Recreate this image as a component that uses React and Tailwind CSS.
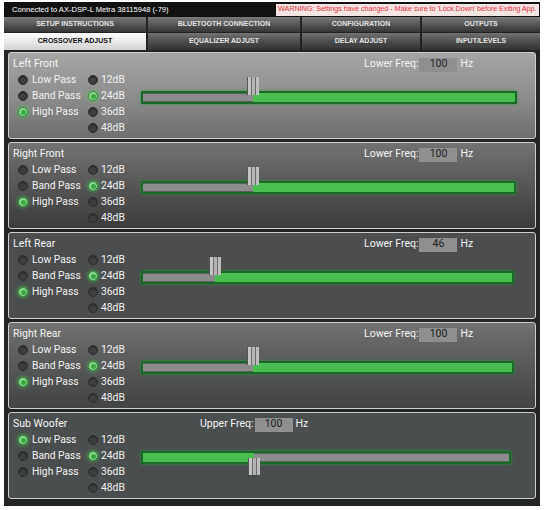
import React from "react";

const panels = [
    {
        name: "Left Front",
        bg: "bg-gradient-to-b from-[#a5a5a5] via-[#8e8e8e] to-[#6e6e6e]",
        freqLabel: "Lower Freq:",
        freq: "100",
        freqPad: "w-[355px]",
        filter: "High Pass",
        thumb: 110,
        low: false,
        track: "w-[376px]",
    },
    {
        name: "Right Front",
        bg: "bg-gradient-to-b from-[#737373] via-[#565656] to-[#3c3c3c]",
        freqLabel: "Lower Freq:",
        freq: "100",
        freqPad: "w-[355px]",
        filter: "High Pass",
        thumb: 110,
        low: false,
        track: "w-[375px]",
    },
    {
        name: "Left Rear",
        bg: "bg-[#4b4d4e]",
        freqLabel: "Lower Freq:",
        freq: "46",
        freqPad: "w-[355px]",
        filter: "High Pass",
        thumb: 72,
        low: false,
        track: "w-[373px]",
    },
    {
        name: "Right Rear",
        bg: "bg-gradient-to-b from-[#727272] via-[#575858] to-[#434444]",
        freqLabel: "Lower Freq:",
        freq: "100",
        freqPad: "w-[355px]",
        filter: "High Pass",
        thumb: 110,
        low: false,
        track: "w-[373px]",
    },
    {
        name: "Sub Woofer",
        bg: "bg-[#4b4e4f]",
        freqLabel: "Upper Freq:",
        freq: "100",
        freqPad: "w-[191px]",
        filter: "Low Pass",
        thumb: 111,
        low: true,
        track: "w-[370px]",
    },
];

const topTabs = [
    { label: "SETUP INSTRUCTIONS", w: "w-[144px]" },
    { label: "BLUETOOTH CONNECTION", w: "w-[154px]" },
    { label: "CONFIGURATION", w: "w-[120px]" },
    { label: "OUTPUTS", w: "w-[118px]" },
];

const subTabs = [
    { label: "CROSSOVER ADJUST", w: "w-[144px]", active: true },
    { label: "EQUALIZER ADJUST", w: "w-[154px]" },
    { label: "DELAY ADJUST", w: "w-[120px]" },
    { label: "INPUT/LEVELS", w: "w-[118px]" },
];

function Radio({ on, label, gap }) {
    return (
        <div className={`flex h-[16px] items-center ${gap}`}>
            {on ? (
                <span className="flex h-[10px] w-[10px] items-center justify-center rounded-full border border-[#2f8a38] bg-[#8fd493] shadow-[0_0_4px_#47c04f]">
                    <span className="h-[5px] w-[5px] rounded-full bg-[#3aa843]" />
                </span>
            ) : (
                <span className="h-[10px] w-[10px] rounded-full border border-[#2e2e2e] bg-[#3d3e3e] shadow-[inset_0_1px_1px_rgba(0,0,0,0.4)]" />
            )}
            <span className="text-[10.3px] leading-none text-[#f1f1f1]">{label}</span>
        </div>
    );
}

function Thumb() {
    return (
        <div className="flex h-full w-full border-l border-[#555]">
            <span className="w-[3px] bg-[#c4c4c4]" />
            <span className="w-[1px] bg-[#6b6b6b]" />
            <span className="w-[3px] bg-[#b3b3b3]" />
            <span className="w-[1px] bg-[#6b6b6b]" />
            <span className="w-[3px] bg-[#bdbdbd]" />
        </div>
    );
}

function Slider({ pos, low, track }) {
    const gray = <div className="h-full border-y border-[#5e5e5e] bg-[#8c8c8c]" style={low ? { flex: 1 } : { width: pos }} />;
    const green = <div className="h-full bg-[#49bd4f]" style={low ? { width: pos } : { flex: 1 }} />;

    return (
        <div className={`relative mt-[19px] h-[13px] ${track} rounded-[1px] bg-[#1c6a29] p-[2px] shadow-[0_0_3px_#2a9a3a]`}>
            <div className="flex h-full w-full">
                {low ? green : gray}
                {low ? gray : green}
            </div>
            {low ? (
                <div className="absolute top-[7px] h-[17px] w-[12px]" style={{ left: pos - 4 }}>
                    <Thumb />
                </div>
            ) : (
                <div className="absolute top-[-14px] h-[18px] w-[12px]" style={{ left: pos - 4 }}>
                    <Thumb />
                </div>
            )}
        </div>
    );
}

function Panel({ p }) {
    return (
        <section className={`h-[87px] rounded-[3px] border border-[#cdcdcd] ${p.bg}`}>
            <div className="mt-[4px] flex h-[15px] items-center">
                <div className={`${p.freqPad} pl-[4px] text-[10.5px] leading-none text-[#f3f3f3]`}>{p.name}</div>
                <span className="text-[10.5px] leading-none text-[#f3f3f3]">{p.freqLabel}</span>
                <span className="ml-[1px] flex h-[14px] w-[38px] items-center justify-center bg-[#8f8f8f] text-[10.5px] leading-none text-[#1e1e1e]">
                    {p.freq}
                </span>
                <span className="ml-[3px] text-[10.5px] leading-none text-[#f3f3f3]">Hz</span>
            </div>
            <div className="flex">
                <div className="w-[79px] pl-[9px]">
                    {["Low Pass", "Band Pass", "High Pass"].map((f) => (
                        <Radio key={f} label={f} on={f === p.filter} gap="gap-[4px]" />
                    ))}
                </div>
                <div className="w-[53px]">
                    {["12dB", "24dB", "36dB", "48dB"].map((d) => (
                        <Radio key={d} label={d} on={d === "24dB"} gap="gap-[3px]" />
                    ))}
                </div>
                <Slider pos={p.thumb} low={p.low} track={p.track} />
            </div>
        </section>
    );
}

export default function App() {
    return (
        <div className="min-h-[510px] bg-white pl-[4px] pt-[2px] font-['Roboto',sans-serif]">
            <div className="h-[504px] w-[536px] bg-[#232424]">
                <div className="flex h-[15px] items-center bg-[#111] font-['Liberation_Sans',sans-serif]">
                    <span className="w-[272px] whitespace-nowrap pl-[8px] text-[7.6px] text-white">Connected to AX-DSP-L Metra 38115948 (-79)</span>
                    <span className="flex h-[12px] w-[263px] items-center overflow-hidden whitespace-nowrap bg-[#f4e4e4] pl-[2px] text-[7.3px] tracking-[-0.1px] text-[#e2343c]">
                        WARNING: Settings have changed - Make sure to 'Lock Down' before Exiting App.
                    </span>
                </div>
                <div className="flex h-[15px] font-['Liberation_Sans',sans-serif]">
                    {topTabs.map((t) => (
                        <div
                            key={t.label}
                            className={`${t.w} flex items-center justify-center border-r-2 border-[#222] bg-gradient-to-b from-[#7a7a7a] via-[#555] to-[#363636] text-[7px] font-bold text-[#e2e2e2] last:border-r-0`}
                        >
                            {t.label}
                        </div>
                    ))}
                </div>
                <div className="flex h-[18px] border-t border-[#222] font-['Liberation_Sans',sans-serif]">
                    {subTabs.map((t) =>
                        t.active ? (
                            <div
                                key={t.label}
                                className={`${t.w} flex items-center justify-center border-r-2 border-[#222] bg-gradient-to-b from-[#fdfdfd] to-[#d2d2d2] text-[7px] font-bold text-[#111]`}
                            >
                                {t.label}
                            </div>
                        ) : (
                            <div
                                key={t.label}
                                className={`${t.w} flex items-center justify-center border-r-2 border-[#222] bg-gradient-to-b from-[#727272] via-[#4e4e4e] to-[#333] text-[7px] font-bold text-[#e2e2e2] last:border-r-0`}
                            >
                                {t.label}
                            </div>
                        )
                    )}
                </div>
                <div className="mt-[2px] flex flex-col gap-[3px] px-[4px]">
                    {panels.map((p) => (
                        <Panel key={p.name} p={p} />
                    ))}
                </div>
            </div>
        </div>
    );
}
